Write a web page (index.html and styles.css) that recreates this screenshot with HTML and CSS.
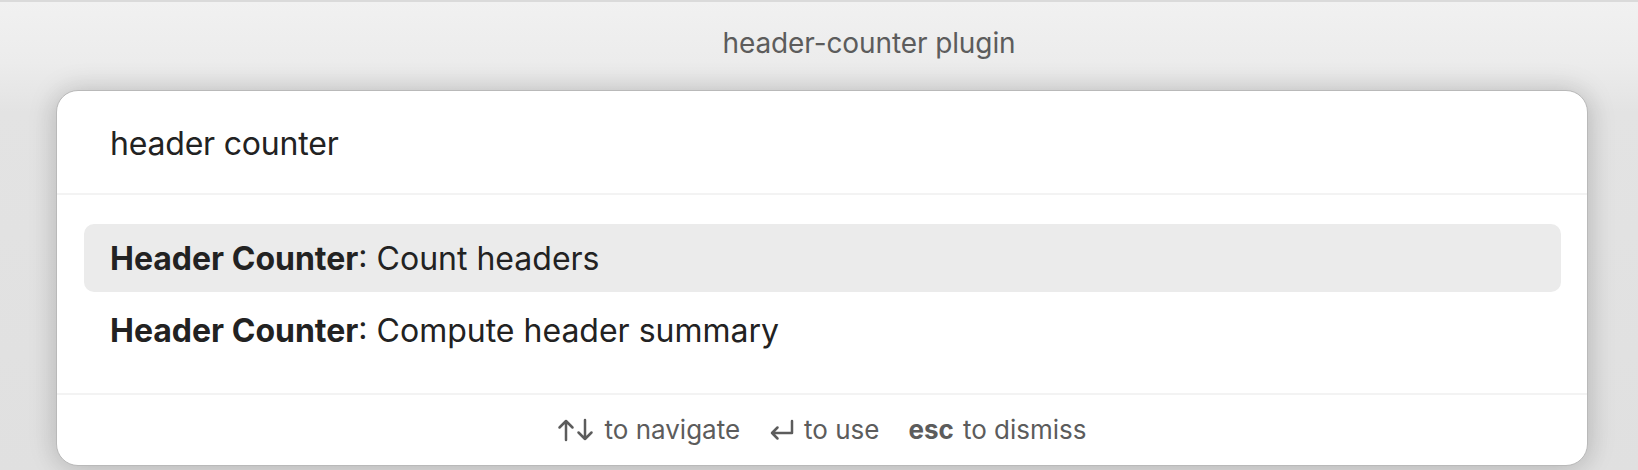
FILE: index.html
```html
<!DOCTYPE html>
<html lang="en">
<head>
<meta charset="utf-8">
<title>header-counter plugin</title>
<link rel="stylesheet" href="styles.css">
</head>
<body>
<div class="window">
  <div class="titlebar">header-counter plugin</div>
  <div class="modal">
    <div class="prompt-input">header counter</div>
    <div class="results">
      <div class="suggestion is-selected"><b>Header Counter</b>: Count headers</div>
      <div class="suggestion"><b>Header Counter</b>: Compute header summary</div>
    </div>
    <div class="instructions">
      <span class="instruction">
        <svg class="icon arrows" viewBox="0 0 38 24" width="38" height="24" aria-hidden="true">
          <path d="M9 22V3M2.5 9.5L9 3l6.5 6.5" fill="none" stroke="#5c5c5c" stroke-width="2.5" stroke-linecap="round" stroke-linejoin="round"/>
          <path d="M28 2v19M21.5 14.5L28 21l6.5-6.5" fill="none" stroke="#5c5c5c" stroke-width="2.5" stroke-linecap="round" stroke-linejoin="round"/>
        </svg>
        <span>to navigate</span>
      </span>
      <span class="instruction">
        <svg class="icon enter" viewBox="0 0 26 24" width="26" height="24" aria-hidden="true">
          <path d="M23 3v12H3M8.5 9.5L3 15l5.5 5.5" fill="none" stroke="#5c5c5c" stroke-width="2.5" stroke-linecap="round" stroke-linejoin="round"/>
        </svg>
        <span>to use</span>
      </span>
      <span class="instruction"><b>esc</b> <span>to dismiss</span></span>
    </div>
  </div>
</div>
</body>
</html>
```

FILE: styles.css
```css
html, body {
  margin: 0;
  padding: 0;
  height: 100%;
  overflow: hidden;
}

body {
  font-family: Inter, "Liberation Sans", sans-serif;
  background: #e6e6e6;
}

.window {
  height: 470px;
  box-sizing: border-box;
  border-top: 2px solid #dadada;
  background: linear-gradient(180deg, #f1f1f1 0px, #ececec 60px, #e3e3e3 110px, #e0e0e0 470px);
  display: flex;
  flex-direction: column;
}

.titlebar {
  height: 88px;
  flex: none;
  display: flex;
  align-items: center;
  justify-content: center;
  padding-left: 100px;
  padding-bottom: 6px;
  box-sizing: border-box;
  font-size: 28px;
  color: #5c5c5c;
  letter-spacing: -0.1px;
}

.modal {
  margin-left: 56px;
  width: 1532px;
  height: 376px;
  flex: none;
  box-sizing: border-box;
  background: #ffffff;
  border: 1.5px solid #b9b9b9;
  border-radius: 22px;
  box-shadow: 0 0 30px rgba(0, 0, 0, 0.14), 0 4px 24px rgba(0, 0, 0, 0.08);
  display: flex;
  flex-direction: column;
  overflow: hidden;
}

.prompt-input {
  height: 104px;
  flex: none;
  box-sizing: border-box;
  display: flex;
  align-items: center;
  padding-left: 53px;
  padding-top: 3px;
  font-size: 32px;
  color: #222222;
  border-bottom: 2px solid #f3f3f3;
  letter-spacing: -0.2px;
}

.results {
  flex: none;
  height: 200px;
  box-sizing: border-box;
  padding: 29px 26px 0 27px;
  display: flex;
  flex-direction: column;
  gap: 4px;
  border-bottom: 2px solid #f3f3f3;
}

.suggestion {
  height: 68px;
  flex: none;
  display: flex;
  align-items: center;
  padding-left: 26px;
  border-radius: 10px;
  font-size: 32px;
  color: #222222;
  white-space: pre;
}

.suggestion b {
  font-weight: 700;
}

.suggestion.is-selected {
  background: #ebebeb;
}

.instructions {
  flex: 1;
  display: flex;
  align-items: center;
  justify-content: center;
  gap: 29px;
  font-size: 26px;
  color: #5c5c5c;
  padding-bottom: 1px;
}

.instruction {
  display: flex;
  align-items: center;
  gap: 9px;
}

.instruction b {
  font-weight: 700;
  color: #5c5c5c;
}

.icon {
  display: block;
}
```
